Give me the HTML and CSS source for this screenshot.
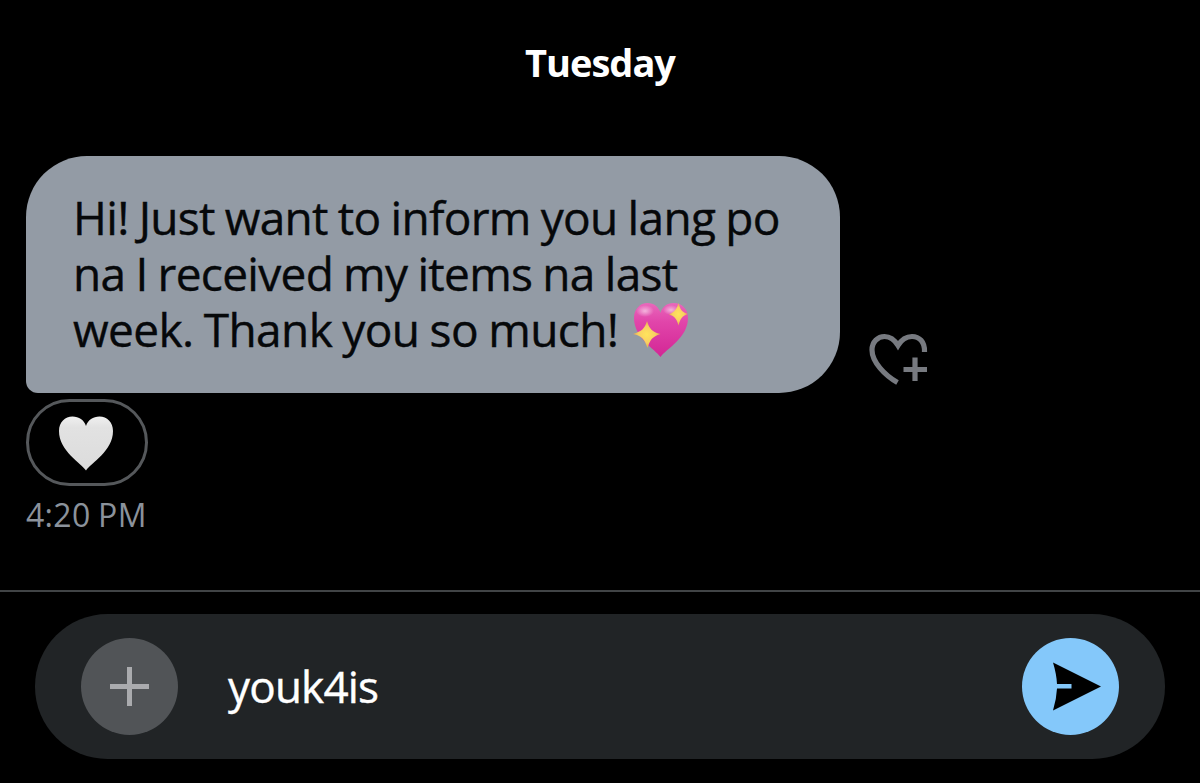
FILE: index.html
```html
<!DOCTYPE html>
<html lang="en">
<head>
<meta charset="UTF-8">
<title>Messages</title>
<link rel="stylesheet" href="styles.css">
</head>
<body>
<main class="chat">
	<h1 class="day"><span>Tuesday</span></h1>
	<div class="message">
		<p class="bubble">
			<span class="line">Hi! Just want to inform you lang po</span>
			<span class="line">na I received my items na last</span>
			<span class="line line-last"><span>week. Thank you so much!</span>
				<svg class="emoji" viewBox="0 0 58 56" role="img" aria-label="sparkling heart">
					<defs>
						<linearGradient id="pink" x1="0" y1="0" x2="0" y2="1">
							<stop offset="0" stop-color="#e868bb"/>
							<stop offset=".35" stop-color="#e145aa"/>
							<stop offset="1" stop-color="#d32695"/>
						</linearGradient>
						<radialGradient id="shine">
							<stop offset="0" stop-color="#fff" stop-opacity=".55"/>
							<stop offset="1" stop-color="#fff" stop-opacity="0"/>
						</radialGradient>
						<radialGradient id="gold">
							<stop offset="0" stop-color="#ffe45c"/>
							<stop offset=".6" stop-color="#f8d062"/>
							<stop offset="1" stop-color="#e5a650"/>
						</radialGradient>
					</defs>
					<path fill="url(#pink)" d="M28.500 55C23 47 2 36 2 16C2 7 8 1 15.500 1C22 1 27 5 28.500 11C30 5 35 1 41.500 1C50 1 56 7 56 16C56 36 34 47 28.500 55Z"/>
					<ellipse cx="13" cy="9" rx="9" ry="6" fill="url(#shine)"/>
					<ellipse cx="39" cy="8" rx="8" ry="5" fill="url(#shine)"/>
					<path fill="url(#gold)" d="M15 19C17.500 27 20 30 28.500 32C20 35 18.500 37 15.500 46C12.500 37 10 34 1 32C10 29 12.500 27 15 19Z"/>
					<path fill="url(#gold)" d="M46.500 1C48.500 8 49.500 9.500 55.500 12C50 14.500 48.500 16 46.500 23.500C44.500 16.500 43 14.500 37 12.500C42.500 9.500 44.500 8 46.500 1Z"/>
				</svg>
			</span>
		</p>
		<svg class="react" viewBox="0 0 60 54" role="img" aria-label="Add reaction">
			<g fill="none" stroke="#777a80" stroke-width="5.200">
				<path d="M28.500 49.500C16 42.500 3 29 3 17C3 8.500 9 3.500 15.500 3.500C22 3.500 26 7.500 29 12.500C32 7.500 36 3.500 43 3.500C50 3.500 56 8.500 55.500 19"/>
				<path d="M46 24.500V48M34.500 36.500H58"/>
			</g>
		</svg>
	</div>
	<div class="reaction">
		<svg viewBox="0 0 56 55" role="img" aria-label="white heart">
			<defs>
				<linearGradient id="white" x1="0" y1="0" x2="0" y2="1">
					<stop offset="0" stop-color="#f0f0f0"/>
					<stop offset=".2" stop-color="#e2e2e2"/>
					<stop offset="1" stop-color="#dcdcdc"/>
				</linearGradient>
			</defs>
			<path fill="url(#white)" d="M28 54.500C23 47 1 35 1 15C1 6 7 .5 14.500 .5C21 .5 26 4 28 10C30 4 35 .5 41.500 .5C49 .5 55 6 55 15C55 35 33 47 28 54.500Z"/>
		</svg>
	</div>
	<time class="time">4:20 PM</time>
</main>
<footer class="footer">
	<div class="composer">
		<button class="round add" aria-label="Add">
			<svg viewBox="0 0 97 97"><path d="M48.500 29V68M29 48.500H68" stroke="#aaabae" stroke-width="5" fill="none"/></svg>
		</button>
		<span class="draft">youk4is</span>
		<button class="round send" aria-label="Send">
			<svg viewBox="0 0 97 97"><path d="M31 24.500L79 48.500L31 72.500Q34.500 61 35 50.500H49.500V46H35Q34.500 36 31 24.500Z"/></svg>
		</button>
	</div>
</footer>
</body>
</html>
```

FILE: styles.css
```css
* {
	box-sizing: border-box;
}

body {
	margin: 0;
	height: 783px;
	display: flex;
	flex-direction: column;
	overflow: hidden;
	background: #000;
	color: #fff;
	font-family: "Open Sans", "Noto Sans", sans-serif;
}

svg {
	display: block;
	flex: none;
}

.chat {
	height: 590px;
	padding: 35px 26px 0;
}

.day {
	margin: 0;
	height: 121px;
	font-size: 38px;
	line-height: 54px;
	font-weight: 700;
	letter-spacing: -1px;
	text-align: center;
}

.message {
	display: flex;
	align-items: flex-end;
	gap: 29px;
}

.bubble {
	margin: 0;
	width: 814px;
	height: 237px;
	padding: 33px 0 0 47px;
	border-radius: 61px 61px 61px 12px;
	background: #939ba5;
	color: #06080a;
	font-size: 46px;
	line-height: 56px;
	letter-spacing: -.7px;
	word-spacing: -1.2px;
	-webkit-text-stroke: .4px;
	white-space: nowrap;
}

.line {
	display: flex;
	width: max-content;
	height: 56px;
}

.line-last {
	letter-spacing: -.6px;
}

.emoji {
	width: 58px;
	height: 56px;
	margin: 1px 0 0 14px;
}

.react {
	width: 60px;
	height: 54px;
	margin-bottom: 6px;
}

.reaction {
	display: flex;
	justify-content: center;
	width: 122px;
	height: 87px;
	margin-top: 6px;
	padding: 14px 3px 0 0;
	border: 3px solid #55585b;
	border-radius: 44px;
}

.reaction svg {
	width: 56px;
	height: 55px;
}

.time {
	display: block;
	width: max-content;
	margin-top: 6px;
	color: #8b929b;
	font-size: 32px;
	line-height: 46px;
	letter-spacing: .3px;
	word-spacing: -1px;
}

.footer {
	height: 193px;
	padding: 22px 35px 0;
	border-top: 2px solid #414446;
}

.composer {
	display: flex;
	align-items: center;
	height: 145px;
	padding: 0 46px;
	border-radius: 73px;
	background: #212426;
}

.round {
	width: 97px;
	height: 97px;
	padding: 0;
	border: 0;
	border-radius: 50%;
	background: #515457;
}

.send {
	margin-left: auto;
	background: #84c8fa;
}

.draft {
	margin: 0 0 2px 50px;
	font-size: 44px;
	line-height: 60px;
	letter-spacing: -.8px;
	-webkit-text-stroke: .4px;
}
```
